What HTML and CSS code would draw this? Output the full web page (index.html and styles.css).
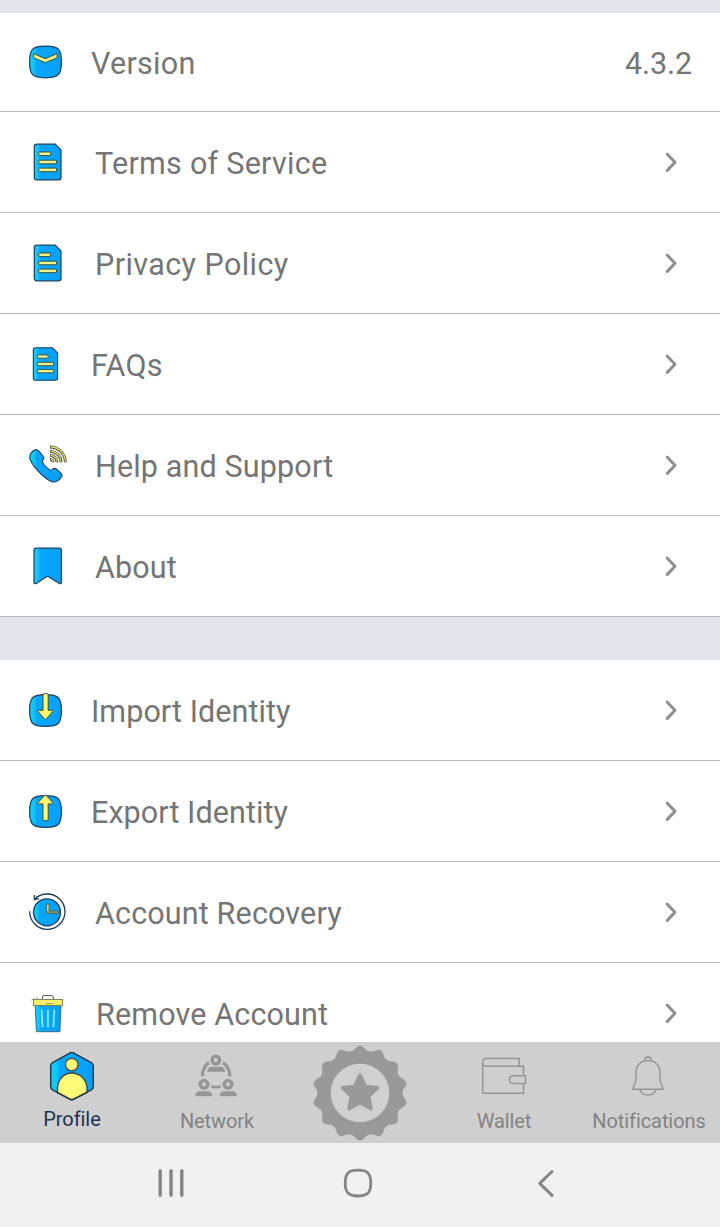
FILE: index.html
```html
<!DOCTYPE html>
<html lang="en">
<head>
<meta charset="utf-8">
<title>Profile</title>
<link rel="stylesheet" href="styles.css">
</head>
<body>
<svg class="defs" width="0" height="0" aria-hidden="true">
  <defs>
    <linearGradient id="blue" x1="0" x2="1" y1="0" y2="0">
      <stop offset="0" stop-color="#12d0f6"/>
      <stop offset=".14" stop-color="#12c4fa"/>
      <stop offset=".22" stop-color="#08a6fa"/>
      <stop offset="1" stop-color="#08a0fa"/>
    </linearGradient>
    <symbol id="doc" viewBox="0 0 60 60">
      <path class="shape" d="M17 12.2H35.2L41 18V45.5Q41 47.8 38.7 47.8H16.8Q14.3 47.8 14.3 45.3V14.7Q14.3 12.2 17 12.2Z"/>
      <g class="note">
        <rect x="18.7" y="20" width="11.8" height="3.6" rx=".6"/>
        <rect x="18.7" y="28.2" width="17.8" height="3.6" rx=".6"/>
        <rect x="18.7" y="36.1" width="17.8" height="3.6" rx=".6"/>
      </g>
    </symbol>
    <symbol id="box" viewBox="0 0 60 60">
      <path class="shape" d="M25.5 14.7C38.5 14.7 41.4 17.6 41.4 30.5S38.5 46.4 25.5 46.4S9.6 43.4 9.6 30.5S12.5 14.7 25.5 14.7Z"/>
    </symbol>
    <symbol id="chevron" viewBox="0 0 20 30">
      <path d="M5.300 7.200L13 15.300L5.300 23.400" fill="none" stroke="#8e8e8e" stroke-width="3" stroke-linecap="round" stroke-linejoin="round"/>
    </symbol>
  </defs>
</svg>

<main class="list">
  <section class="group">
    <div class="row first near">
      <svg class="icon" viewBox="0 0 60 60"><use href="#box" y="-.6" width="60" height="60"/><path class="note" d="M13.500 21.500L25.300 26.800L37.200 21.500V25.700L25.300 30.700L13.500 25.700Z"/></svg>
      <span class="label loose">Version</span><span class="value">4.3.2</span>
    </div>
    <div class="row">
      <svg class="icon" viewBox="0 0 60 60"><use href="#doc" width="60" height="60"/></svg>
      <span class="label loose">Terms of Service</span><svg class="go"><use href="#chevron"/></svg>
    </div>
    <div class="row">
      <svg class="icon" viewBox="0 0 60 60"><use href="#doc" width="60" height="60"/></svg>
      <span class="label looser">Privacy Policy</span><svg class="go"><use href="#chevron"/></svg>
    </div>
    <div class="row near">
      <svg class="icon" viewBox="0 0 60 60"><g transform="translate(.3 2.700) scale(.91)"><use href="#doc" width="60" height="60"/></g></svg>
      <span class="label loose">FAQs</span><svg class="go"><use href="#chevron"/></svg>
    </div>
    <div class="row">
      <svg class="icon" viewBox="0 0 60 60">
        <g transform="translate(0 1) scale(.3333)" fill="none">
          <path d="M39 45Q48 38 56 45L69 60Q74 66 69 71Q64 76 73 87Q83 98 90 102Q94 104 98 99Q104 95 109 99L123 112Q129 118 123 124Q115 136 103 138Q90 138 66 117Q42 95 31 73Q25 58 39 45Z" fill="url(#blue)" stroke="#17415c" stroke-width="3.300"/>
          <path d="M90 33A46 46 0 0 1 136 79M90 46A33 33 0 0 1 123 79M90 58A21 21 0 0 1 111 79M90 70A9 9 0 0 1 99 79" stroke="#3c4334" stroke-width="8.500"/>
          <path d="M92 33A44 46 0 0 1 136 77M92 46A31 33 0 0 1 123 77M92 58A19 21 0 0 1 111 77M92 70A7 9 0 0 1 99 77" stroke="#e3de68" stroke-width="3.800"/>
        </g>
      </svg>
      <span class="label">Help and Support</span><svg class="go"><use href="#chevron"/></svg>
    </div>
    <div class="row">
      <svg class="icon" viewBox="0 0 60 60"><path class="shape" d="M16.300 12.200H39.200Q41.400 12.200 41.400 14.400V46Q41.400 48.600 39 47.200L29 41Q27.500 40 26 41L16.700 47.200Q14 48.600 14 46V14.400Q14 12.200 16.300 12.200Z"/></svg>
      <span class="label">About</span><svg class="go"><use href="#chevron"/></svg>
    </div>
  </section>

  <section class="group">
    <div class="row near">
      <svg class="icon" viewBox="0 0 60 60"><use href="#box" width="60" height="60"/><path class="note bright" d="M23 14Q25.500 12.800 28.200 14V30.300H32.500Q33.500 30.700 32.700 31.500L26.500 38.800Q25.500 39.800 24.500 38.800L18 31.500Q17.400 30.600 18.400 30.300H23Z"/></svg>
      <span class="label tight">Import Identity</span><svg class="go"><use href="#chevron"/></svg>
    </div>
    <div class="row near">
      <svg class="icon" viewBox="0 0 60 60"><use href="#box" width="60" height="60"/><path class="note bright" d="M23 39.200Q25.500 40.400 28.200 39.200V22.900H32.500Q33.500 22.500 32.700 21.700L26.500 14.600Q25.500 13.600 24.500 14.600L18 21.700Q17.400 22.600 18.400 22.900H23Z"/></svg>
      <span class="label tight">Export Identity</span><svg class="go"><use href="#chevron"/></svg>
    </div>
    <div class="row">
      <svg class="icon" viewBox="0 0 60 60">
        <g transform="translate(0 3) scale(.3333)" fill="none" stroke="#26405e" stroke-width="4">
          <path d="M29 79A53 53 0 1 0 82 27Q58 27 43 43M43 30V44L57 41"/>
          <circle cx="81" cy="82" r="40.500" fill="url(#blue)" stroke="#173e5e"/>
          <path d="M80 57H87V78H118V85H80Z" fill="#8d9b67" stroke="#3d6254" stroke-width="2.500"/>
          <path d="M83.500 59V79" stroke="#f3ee80" stroke-width="3.500"/>
        </g>
      </svg>
      <span class="label">Account Recovery</span><svg class="go"><use href="#chevron"/></svg>
    </div>
    <div class="row far">
      <svg class="icon" viewBox="0 0 60 60" fill="none">
        <path d="M22.500 16.500V14Q22.500 12.500 24 12.500H31.800Q33.300 12.500 33.300 14V16.500" stroke="#5c625d" stroke-width="1"/>
        <path d="M11.200 17.500Q12.500 14.800 15 16.300M17 14V16" stroke="#86867c" stroke-width=".9"/>
        <path d="M15.200 22.500H41L39.900 48.700H16.400Z" fill="url(#blue)" stroke="#2c6482" stroke-width=".9"/>
        <path d="M21.600 26.500L22.500 44M27.900 26.500V44M34.300 26.500L33.400 44" stroke="#8cf3dd" stroke-width="1.700"/>
        <rect x="13.500" y="16.500" width="29" height="5.900" fill="#f8ef68" stroke="#777b4e" stroke-width=".9"/>
        <path d="M26 20.500H33" stroke="#8c8b47" stroke-width=".8"/>
      </svg>
      <span class="label">Remove Account</span><svg class="go"><use href="#chevron"/></svg>
    </div>
  </section>
</main>

<nav class="tabs">
  <a class="tab active">
    <svg class="tab-icon" viewBox="0 0 144 62">
      <path d="M69.700 11.100Q71.800 9.900 73.900 11.100L91.300 20.600Q93.200 21.700 93.200 24V44.500Q93.200 46.800 91.300 47.900L73.900 57.200Q71.800 58.300 69.700 57.200L52.600 47.900Q50.700 46.800 50.700 44.500V24Q50.700 21.700 52.600 20.600Z" fill="url(#blue)"/>
      <path d="M57.500 50.500V45.500C58.500 36 64.500 31 71.800 31S86 36 87 45.500V50.500L73.900 57.200Q71.800 58.300 69.700 57.200Z" fill="#fffa78" stroke="#3c493c" stroke-width="1.300"/>
      <circle cx="71.800" cy="22.600" r="6.300" fill="#fffa78" stroke="#3c493c" stroke-width="1.300"/>
      <path d="M69.700 11.100Q71.800 9.900 73.900 11.100L91.300 20.600Q93.200 21.700 93.200 24V44.500Q93.200 46.800 91.300 47.900L73.900 57.200Q71.800 58.300 69.700 57.200L52.600 47.900Q50.700 46.800 50.700 44.500V24Q50.700 21.700 52.600 20.600Z" fill="none" stroke="#213a4b" stroke-width="1.500"/>
    </svg>
    <span class="tab-label">Profile</span>
  </a>
  <a class="tab">
    <svg class="tab-icon" viewBox="0 0 144 62" fill="none" stroke="#969696" stroke-width="3.500">
      <circle cx="71.800" cy="18" r="3.800"/><circle cx="60" cy="42.300" r="3.800"/><circle cx="84" cy="42.300" r="3.800"/>
      <path d="M65 20.600Q58.500 25 58.400 34.300M79 20.600Q85.500 25 86 34.300" stroke-width="3.200"/>
      <path d="M67.300 44.300Q72 46.300 76.700 44.300" stroke-width="2.600"/>
      <g fill="#969696" stroke="none">
        <path d="M63 29.700Q63.500 24.700 68 24.700H76Q80.800 24.700 81.300 29.700Z"/>
        <path d="M51 54.300Q51.500 49.200 56 49.200H63.500Q68 49.200 68.400 54.300Z"/>
        <path d="M75.500 54.300Q76 49.200 80.500 49.200H88Q92.600 49.200 93 54.300Z"/>
      </g>
    </svg>
    <span class="tab-label">Network</span>
  </a>
  <a class="tab badge">
    <svg viewBox="-50 -50 100 100" width="100" height="100">
      <path fill="#999" stroke="#999" stroke-width=".6" d="M-4.450 -44.500Q0 -50 4.450 -44.500Q8.900 -39 15.300 -42Q21.700 -45.050 23.300 -38.150Q24.950 -31.250 32 -31.200Q39.100 -31.200 37.550 -24.250Q36.050 -17.350 42.400 -14.250Q48.750 -11.100 44.350 -5.550Q40 0 44.350 5.550Q48.750 11.100 42.400 14.250Q36.050 17.350 37.550 24.250Q39.100 31.200 32 31.200Q24.950 31.250 23.300 38.150Q21.700 45.050 15.300 42Q8.900 39 4.450 44.500Q0 50 -4.450 44.500Q-8.900 39 -15.300 42Q-21.700 45.050 -23.300 38.150Q-24.950 31.250 -32 31.200Q-39.100 31.200 -37.550 24.250Q-36.050 17.350 -42.400 14.250Q-48.750 11.100 -44.350 5.550Q-40 0 -44.350 -5.550Q-48.750 -11.100 -42.400 -14.250Q-36.050 -17.350 -37.550 -24.250Q-39.100 -31.200 -32 -31.200Q-24.950 -31.250 -23.300 -38.150Q-21.700 -45.050 -15.300 -42Q-8.900 -39 -4.450 -44.500Z"/>
      <circle r="29.300" fill="#d0d0d0"/>
      <path d="M0 -18L5.400 -6.800L17.400 -5.300L8.700 3.200L11 15.600L0 9.800L-11 15.600L-8.700 3.200L-17.400 -5.300L-5.400 -6.800Z" fill="#999" stroke="#999" stroke-width="3.500" stroke-linejoin="round"/>
    </svg>
  </a>
  <a class="tab">
    <svg class="tab-icon" viewBox="0 0 144 62" fill="none" stroke="#969696" stroke-width="1.500">
      <path d="M91.500 34V24.200H54.300Q50.700 24.200 50.700 20.400T54.300 16.500H87.200V24.200M50.700 20.400V51.200H91.500V41.500"/>
      <path d="M93.500 33.800H81.200Q77.500 33.800 77.500 37.700T81.200 41.500H93.500Z"/>
    </svg>
    <span class="tab-label plain">Wallet</span>
  </a>
  <a class="tab">
    <svg class="tab-icon" viewBox="0 0 144 62" fill="none" stroke="#969696" stroke-width="1.400">
      <path d="M69 18.800V17.500Q69 15 72 15T75 17.500V18.800"/>
      <path d="M72 18.500C79 18.500 84 23.500 84 30V35C84 42 86 43.500 87.200 47.300H56.600C58 43.500 60 42 60 35V30C60 23.500 65 18.500 72 18.500Z"/>
      <path d="M63.800 47.500C66 54.800 78 54.800 80.200 47.500"/>
    </svg>
    <span class="tab-label">Notifications</span>
  </a>
</nav>

<footer class="system">
  <svg viewBox="0 0 40 40"><path d="M9.200 7.700V32.300M20 7.700V32.300M30.800 7.700V32.300" stroke-width="3.400"/></svg>
  <svg viewBox="0 0 40 40"><path d="M20 7.200C29.500 7.200 32.800 10.500 32.800 20S29.500 33 20 33S7.200 29.500 7.200 20S10.500 7.200 20 7.200Z" stroke-width="2.800"/></svg>
  <svg viewBox="0 0 40 40"><path d="M27 8.500L14.700 20.400L27 32.300" stroke-width="3"/></svg>
</footer>
</body>
</html>
```
FILE: styles.css
```css
* { box-sizing: border-box; }
body {
  margin: 0;
  width: 720px;
  height: 1227px;
  overflow: hidden;
  display: flex;
  flex-direction: column;
  background: #e2e5ea;
  font-family: Roboto, "Liberation Sans", sans-serif;
  color: #757575;
}
svg { display: block; flex: none; }
.defs { position: absolute; }
.list {
  height: 1042px;
  flex: none;
  overflow: hidden;
  padding-top: 13px;
  display: flex;
  flex-direction: column;
  gap: 43px;
}
.group { flex: none; background: #fff; }
.row {
  height: 101px;
  padding: 0 38px 0 20px;
  border-bottom: 1px solid #b9b9b9;
  display: flex;
  align-items: center;
}
.row.first { height: 99px; padding-right: 28px; }
.icon { width: 60px; height: 60px; }
.label, .value {
  padding-top: 3px;
  font-size: 30.5px;
  line-height: 36px;
  letter-spacing: .15px;
  white-space: nowrap;
}
.value { letter-spacing: -.1px; }
.label { flex: 1; margin-left: 15px; }
.label.loose { letter-spacing: .27px; }
.label.looser { letter-spacing: .42px; }
.label.tight { letter-spacing: .07px; }
.near .label { margin-left: 11px; }
.far .label { margin-left: 16px; }
.go { width: 20px; height: 30px; }
.shape { fill: url(#blue); stroke: #17415c; stroke-width: 1.2; }
.note { fill: #eef38b; stroke: #35513f; stroke-width: 1; }
.note.bright { fill: #fff968; }
.tabs {
  height: 101px;
  flex: none;
  background: #cfcfcf;
  display: grid;
  grid-template-columns: repeat(5, 144px);
}
.tab { display: flex; flex-direction: column; align-items: center; }
.tab-icon { width: 144px; height: 62px; }
.tab-label {
  margin-top: 5px;
  padding-left: 2px;
  font-size: 20px;
  line-height: 24px;
  letter-spacing: -.08px;
  color: #838383;
  white-space: nowrap;
}
.tab-label.plain { padding: 0; }
.active .tab-label { margin-top: 3px; padding: 0; color: #22344f; }
.badge svg { margin-top: .5px; }
.system {
  height: 84px;
  flex: none;
  padding: 0 78px;
  background: #f1f1f1;
  display: grid;
  grid-template-columns: repeat(3, 187px);
  justify-items: center;
  align-items: center;
}
.system svg {
  width: 40px;
  height: 40px;
  margin: 0 1px 4px 0;
  fill: none;
  stroke: #858585;
  stroke-linecap: round;
  stroke-linejoin: round;
}
```
